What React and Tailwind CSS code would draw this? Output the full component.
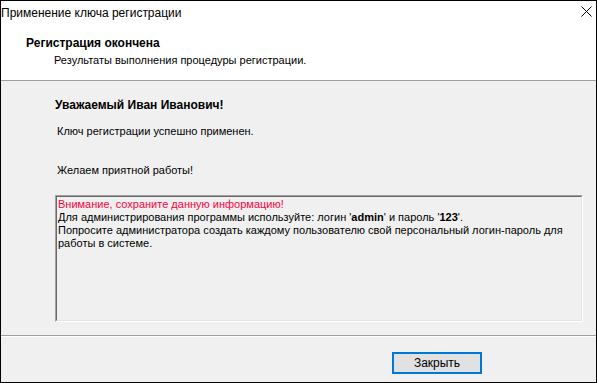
export default function App() {
  const f = { fontFamily: '"Liberation Sans", Arial, sans-serif' };
  return (
    <div className="w-[597px] h-[383px] border border-black bg-[#f0f0f0] flex flex-col text-black overflow-hidden" style={f}>
      <div className="h-[80px] bg-white border-b border-[#a0a0a0] flex flex-col shrink-0">
        <div className="flex items-start justify-between h-[20px]">
          <div className="text-[12px] leading-[16px] mt-[4px] pl-0">Применение ключа регистрации</div>
          <svg width="11" height="11" viewBox="0 0 11 11" className="mt-[5px] mr-[4px]">
            <path d="M0.5 0.5 L10.5 10.5 M10.5 0.5 L0.5 10.5" stroke="#000" strokeWidth="1" fill="none" />
          </svg>
        </div>
        <div className="ml-[25px] mt-[15px] text-[12px] leading-[14px] font-bold">Регистрация окончена</div>
        <div className="ml-[53px] mt-[3px] text-[11px] leading-[14px]">Результаты выполнения процедуры регистрации.</div>
      </div>
      <div className="flex flex-col flex-1">
        <div className="ml-[54px] mt-[17px] text-[12px] leading-[14px] font-bold">Уважаемый Иван Иванович!</div>
        <div className="ml-[56px] mt-[12px] text-[11px] leading-[14px]">Ключ регистрации успешно применен.</div>
        <div className="ml-[56px] mt-[25px] text-[11px] leading-[14px]">Желаем приятной работы!</div>
        <div className="ml-[54px] mt-[18px] w-[528px] h-[127px] border-t border-l border-[#a0a0a0] border-r-white border-b-white border-r border-b">
          <div className="h-full border-t border-l border-[#696969] border-r border-b border-r-[#e3e3e3] border-b-[#e3e3e3] pl-[1px] pt-[1px] text-[11px] leading-[13px]">
            <div className="text-[#ff0040]">Внимание, сохраните данную информацию!</div>
            <div>
              Для администрирования программы используйте: логин '<b>admin</b>' и пароль '<b>123</b>'.
            </div>
            <div>Попросите администратора создать каждому пользователю свой персональный логин-пароль для работы в системе.</div>
          </div>
        </div>
        <div className="mt-[13px] border-t border-[#a0a0a0] border-b border-b-white" />
        <div className="flex justify-end pr-[114px] mt-[15px]">
          <button className="w-[90px] h-[22px] border-2 border-[#0078d7] bg-[#e1e1e1] text-[12px] leading-[16px] flex items-center justify-center">
            Закрыть
          </button>
        </div>
      </div>
    </div>
  );
}
